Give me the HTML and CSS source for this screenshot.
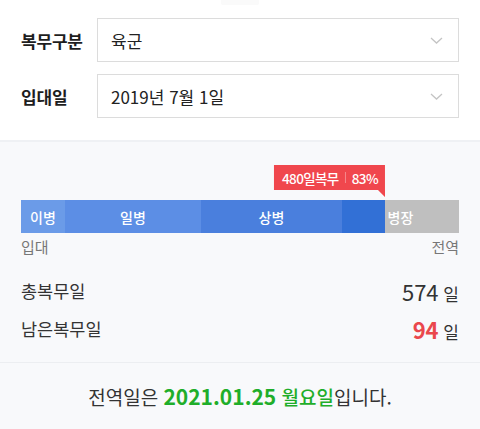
FILE: index.html
```html
<!DOCTYPE html>
<html lang="ko">
<head>
<meta charset="utf-8">
<link rel="stylesheet" href="styles.css">
</head>
<body>
<div class="page">
  <section class="form">
    <div class="handle"></div>
    <div class="field">
      <span class="label">복무구분</span>
      <div class="select">
        <span class="value">육군</span>
        <svg class="chev" width="13" height="7" viewBox="0 0 13 7"><path d="M1 1 L6.5 6 L12 1" fill="none" stroke="#c4c4c4" stroke-width="1.3"/></svg>
      </div>
    </div>
    <div class="field">
      <span class="label">입대일</span>
      <div class="select">
        <span class="value">2019년 7월 1일</span>
        <svg class="chev" width="13" height="7" viewBox="0 0 13 7"><path d="M1 1 L6.5 6 L12 1" fill="none" stroke="#c4c4c4" stroke-width="1.3"/></svg>
      </div>
    </div>
  </section>
  <section class="status">
    <div class="tip-row">
      <div class="tip" style="left: 83.1%">
        <span>480일복무</span><span class="sep"></span><span>83%</span>
      </div>
    </div>
    <div class="bar">
      <div class="seg s1">이병</div>
      <div class="seg s2">일병</div>
      <div class="seg s3">상병</div>
      <div class="seg s4">병장</div>
    </div>
    <div class="ends"><span>입대</span><span>전역</span></div>
    <div class="stat"><span class="name">총복무일</span><span class="num"><b>574</b> 일</span></div>
    <div class="stat"><span class="name">남은복무일</span><span class="num"><b class="red">94</b> 일</span></div>
  </section>
  <footer class="result">
    <p class="msg">전역일은 <b class="green">2021.01.25</b> <span class="green day">월요일</span>입니다.</p>
  </footer>
</div>
</body>
</html>
```
FILE: styles.css
```css
* { box-sizing: border-box; }
html, body { margin: 0; padding: 0; }
body {
  font-family: "Noto Sans CJK KR", "Noto Sans", sans-serif;
  background: #f8f9fb;
  color: #222;
  width: 480px;
  height: 429px;
  overflow: hidden;
}
.form {
  background: #fff;
  padding: 0 21px 22px;
  display: flex;
  flex-direction: column;
  gap: 12px;
}
.handle {
  width: 38px;
  height: 5px;
  margin: 0 auto 1px;
  background: #fafafa;
  border-radius: 0 0 2px 2px;
}
.field {
  display: flex;
  align-items: center;
  height: 44px;
}
.label {
  width: 76px;
  font-size: 17px;
  font-weight: 700;
  color: #1e1e1e;
  letter-spacing: -0.2px;
}
.select {
  flex: 1;
  height: 44px;
  border: 1px solid #dcdcdc;
  display: flex;
  align-items: center;
  justify-content: space-between;
  padding: 0 15px 0 13px;
}
.value {
  font-size: 17px;
  color: #222;
}
.status {
  border-top: 2px solid #eff1f4;
  padding: 23px 21px 0;
}
.tip-row {
  position: relative;
  height: 35px;
}
.tip {
  position: absolute;
  top: 0;
  transform: translateX(-100%);
  height: 25px;
  background: #f0474d;
  color: #fff;
  font-size: 13.5px;
  font-weight: 500;
  display: flex;
  align-items: center;
  gap: 6px;
  padding: 0 7px 0 8px;
  white-space: nowrap;
  letter-spacing: -0.6px;
}
.tip::after {
  content: "";
  position: absolute;
  right: 0;
  top: 100%;
  border-top: 7px solid #f0474d;
  border-left: 7px solid transparent;
}
.sep {
  width: 1px;
  height: 11px;
  background: rgba(255,255,255,0.35);
}
.bar {
  display: flex;
  height: 33px;
}
.seg {
  display: flex;
  align-items: center;
  justify-content: center;
  color: #fff;
  font-size: 14px;
  font-weight: 500;
}
.s1 { flex: 44; background: #6b9be8; }
.s2 { flex: 136; background: #5c8ee5; }
.s3 { flex: 141; background: #4a7fdd; }
.s4 {
  flex: 117;
  background: linear-gradient(to right, #3270d6 0 36.8%, #bfbfbf 36.8%);
}
.ends {
  display: flex;
  justify-content: space-between;
  font-size: 15px;
  color: #777;
  margin-top: 3px;
  height: 22px;
  line-height: 22px;
}
.stat {
  display: flex;
  justify-content: space-between;
  align-items: center;
  height: 37px;
  font-size: 17.5px;
  color: #333;
}
.ends + .stat { margin-top: 14px; }
.stat + .stat { margin-top: 1px; }
.num { font-size: 17px; }
.num b { font-size: 22px; font-weight: 400; }
.num b.red { color: #ea474c; font-weight: 700; }
.result {
  margin-top: 15px;
  border-top: 1px solid #eceef1;
  height: 67px;
  display: flex;
  align-items: center;
  justify-content: center;
}
.msg {
  margin: 0;
  font-size: 19px;
  color: #333;
}
.green { color: #1fae2a; }
.day { font-weight: 500; }
b.green { font-weight: 700; font-size: 21px; }
```
